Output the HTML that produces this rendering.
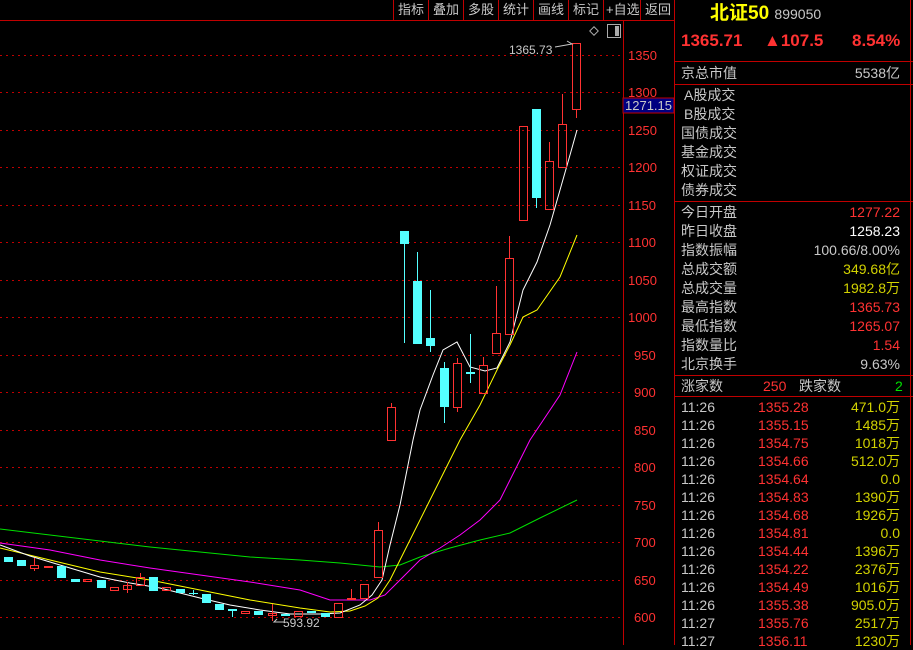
<!DOCTYPE html>
<html><head><meta charset="utf-8"><style>
body{margin:0;width:913px;height:645px;background:#000;overflow:hidden;font-family:"Liberation Sans","Noto Sans CJK SC",sans-serif;position:relative}
.tb{position:absolute;top:0;height:20px;font-size:13px;color:#c8c8c8;line-height:20px;border-left:1px solid #c00000;padding:0 4px}
.p{position:absolute;font-size:14px;line-height:19px;color:#c8c8c8;white-space:nowrap}
.r{color:#ff3232}.y{color:#d2d200}.w{color:#fff}.g{color:#00e000}
.hl{position:absolute;left:675px;width:238px;height:1px;background:#c00000}
</style></head><body>
<svg width="913" height="645" style="position:absolute;left:0;top:0" xmlns="http://www.w3.org/2000/svg">
<g stroke="#c00000" stroke-width="1">
<line x1="0" y1="20.5" x2="675" y2="20.5"/>
<line x1="623.5" y1="20" x2="623.5" y2="645"/>
<line x1="674.5" y1="0" x2="674.5" y2="645"/>
<line x1="910.5" y1="0" x2="910.5" y2="645"/>
</g>
<g stroke="#c00000" stroke-dasharray="2,4">
<line x1="0" y1="55.5" x2="620" y2="55.5"/><line x1="0" y1="92.5" x2="620" y2="92.5"/><line x1="0" y1="130.5" x2="620" y2="130.5"/><line x1="0" y1="167.5" x2="620" y2="167.5"/><line x1="0" y1="205.5" x2="620" y2="205.5"/><line x1="0" y1="242.5" x2="620" y2="242.5"/><line x1="0" y1="280.5" x2="620" y2="280.5"/><line x1="0" y1="317.5" x2="620" y2="317.5"/><line x1="0" y1="355.5" x2="620" y2="355.5"/><line x1="0" y1="392.5" x2="620" y2="392.5"/><line x1="0" y1="430.5" x2="620" y2="430.5"/><line x1="0" y1="467.5" x2="620" y2="467.5"/><line x1="0" y1="505.5" x2="620" y2="505.5"/><line x1="0" y1="542.5" x2="620" y2="542.5"/><line x1="0" y1="580.5" x2="620" y2="580.5"/><line x1="0" y1="617.5" x2="620" y2="617.5"/>
</g>
<g fill="#ff3232" font-size="13" font-family="Liberation Sans">
<text x="628" y="60">1350</text><text x="628" y="97">1300</text><text x="628" y="135">1250</text><text x="628" y="172">1200</text><text x="628" y="210">1150</text><text x="628" y="247">1100</text><text x="628" y="285">1050</text><text x="628" y="322">1000</text><text x="634" y="360">950</text><text x="634" y="397">900</text><text x="634" y="435">850</text><text x="634" y="472">800</text><text x="634" y="510">750</text><text x="634" y="547">700</text><text x="634" y="585">650</text><text x="634" y="622">600</text>
</g>
<rect x="623" y="98" width="51" height="15" fill="#000080" stroke="#c00000"/>
<text x="625" y="110" fill="#c8c8c8" font-size="13" font-family="Liberation Sans">1271.15</text>
<g fill="none" stroke-width="1">
<polyline stroke="#00e000" points="0,529 50,535 100,541 150,547 200,552 250,557 300,560 340,563 380,567 400,565 420,557 450,548 480,540 510,533 540,518 577,500"/>
<polyline stroke="#ff00ff" points="0,543 50,550 100,560 150,568 200,575 250,582 300,590 330,600 370,600 385,595 400,580 420,560 440,548 460,535 480,520 500,500 530,440 560,395 577,352"/>
<polyline stroke="#ffff00" points="0,548 50,560 100,572 150,580 200,590 250,600 300,608 330,612 350,611 365,606 378,598 390,580 400,560 430,500 460,440 480,405 497,370 510,345 523,317 537,310 560,277 577,235"/>
<polyline stroke="#ffffff" points="0,545 30,556 60,565 100,577 130,583 160,588 200,598 230,605 260,610 290,614 320,614 340,613 360,605 372,595 382,580 390,545 400,505 413,440 420,410 433,375 443,350 457,342 470,367 485,371 497,368 510,342 523,290 537,262 550,225 560,190 570,155 577,130"/>
</g>
<g fill="#54ffff">
<rect x="4" y="557" width="9" height="5"/><rect x="17" y="560" width="9" height="6"/><rect x="57" y="566" width="9" height="12"/><rect x="71" y="579" width="9" height="3"/><rect x="97" y="580" width="9" height="8"/><rect x="149" y="577" width="9" height="14"/><rect x="176" y="589" width="9" height="4"/><rect x="189" y="593" width="9" height="1"/><rect x="202" y="594" width="9" height="9"/><rect x="215" y="604" width="9" height="6"/><rect x="228" y="609" width="9" height="2"/><rect x="254" y="611" width="9" height="4"/><rect x="281" y="614" width="9" height="2"/><rect x="307" y="611" width="9" height="2"/><rect x="321" y="613" width="9" height="4"/>
<rect x="400" y="231" width="9" height="13"/><rect x="413" y="281" width="9" height="63"/><rect x="426" y="338" width="9" height="8"/><rect x="440" y="368" width="9" height="39"/><rect x="466" y="372" width="9" height="2"/><rect x="532" y="109" width="9" height="89"/>
</g>
<g stroke="#54ffff">
<line x1="193.5" y1="590" x2="193.5" y2="595"/><line x1="232.5" y1="609" x2="232.5" y2="617"/><line x1="404.5" y1="244" x2="404.5" y2="343"/><line x1="417.5" y1="252" x2="417.5" y2="281"/><line x1="430.5" y1="290" x2="430.5" y2="352"/><line x1="444.5" y1="362" x2="444.5" y2="423"/><line x1="470.5" y1="334" x2="470.5" y2="383"/><line x1="536.5" y1="198" x2="536.5" y2="208"/>
</g>
<g stroke="#ff3232" fill="none">
<rect x="30.5" y="565.5" width="8" height="3"/><line x1="34.5" y1="558" x2="34.5" y2="565"/><line x1="34.5" y1="569" x2="34.5" y2="571"/>
<rect x="44.5" y="566.5" width="8" height="1"/>
<rect x="83.5" y="579.5" width="8" height="2"/>
<rect x="110.5" y="587.5" width="8" height="3"/>
<rect x="123.5" y="585.5" width="8" height="4"/><line x1="127.5" y1="582" x2="127.5" y2="593"/>
<rect x="136.5" y="577.5" width="8" height="8"/><line x1="140.5" y1="573" x2="140.5" y2="577"/>
<rect x="162.5" y="587.5" width="8" height="3"/>
<rect x="241.5" y="611.5" width="8" height="2"/>
<rect x="268.5" y="613.5" width="8" height="2"/><line x1="272.5" y1="604" x2="272.5" y2="621"/>
<rect x="294.5" y="611.5" width="8" height="5"/>
<rect x="334.5" y="603.5" width="8" height="14"/>
<rect x="347.5" y="598.5" width="8" height="1"/><line x1="351.5" y1="589" x2="351.5" y2="598"/>
<rect x="360.5" y="584.5" width="8" height="14"/>
<rect x="374.5" y="530.5" width="8" height="47"/><line x1="378.5" y1="522" x2="378.5" y2="530"/>
<rect x="387.5" y="407.5" width="8" height="33"/><line x1="391.5" y1="403" x2="391.5" y2="407"/>
<rect x="453.5" y="363.5" width="8" height="44"/><line x1="457.5" y1="358" x2="457.5" y2="363"/><line x1="457.5" y1="408" x2="457.5" y2="412"/>
<rect x="479.5" y="365.5" width="8" height="28"/><line x1="483.5" y1="357" x2="483.5" y2="365"/>
<rect x="492.5" y="333.5" width="8" height="20"/><line x1="496.5" y1="286" x2="496.5" y2="333"/>
<rect x="505.5" y="258.5" width="8" height="76"/><line x1="509.5" y1="236" x2="509.5" y2="258"/>
<rect x="519.5" y="126.5" width="8" height="94"/>
<rect x="545.5" y="161.5" width="8" height="48"/><line x1="549.5" y1="142" x2="549.5" y2="161"/>
<rect x="558.5" y="124.5" width="8" height="43"/><line x1="562.5" y1="94" x2="562.5" y2="124"/>
<rect x="572.5" y="43.5" width="8" height="66"/><line x1="576.5" y1="110" x2="576.5" y2="118"/>
</g>
<text x="509" y="54" fill="#c8c8c8" font-size="12" font-family="Liberation Sans">1365.73</text>
<polyline points="555,47 572,44 567,41" fill="none" stroke="#c8c8c8"/>
<text x="283" y="627" fill="#c8c8c8" font-size="12" font-family="Liberation Sans">593.92</text>
<polyline points="284,622 274,622 277,619" fill="none" stroke="#c8c8c8"/>
<rect x="591" y="28" width="6" height="6" transform="rotate(45 594 31)" fill="none" stroke="#aaa"/>
<rect x="607.5" y="24.5" width="13" height="13" fill="none" stroke="#aaa"/><rect x="615" y="26" width="4" height="10" fill="#aaa"/>
</svg>
<div class="tb" style="left:393px">指标</div><div class="tb" style="left:428px">叠加</div><div class="tb" style="left:463px">多股</div><div class="tb" style="left:498px">统计</div><div class="tb" style="left:533px">画线</div><div class="tb" style="left:568px">标记</div><div class="tb" style="left:603px;padding:0 2px">+自选</div><div class="tb" style="left:640px">返回</div>
<div class="p" style="left:710px;top:2px;font-size:19px;line-height:24px;color:#ffff00;font-weight:bold">北证50 <span style="font-size:14px;color:#c8c8c8;font-weight:normal">899050</span></div>
<div class="p r" style="left:681px;top:30px;font-size:17px;line-height:22px;font-weight:bold">1365.71</div>
<div class="p r" style="left:764px;top:30px;font-size:17px;line-height:22px;font-weight:bold">▲107.5</div>
<div class="p r" style="left:852px;top:30px;font-size:17px;line-height:22px;font-weight:bold">8.54%</div>
<div class="hl" style="top:61px"></div>
<div class="p" style="left:681px;top:64px">京总市值</div><div class="p" style="right:13px;top:64px">5538亿</div>
<div class="hl" style="top:84px"></div>
<div class="p" style="left:684px;top:86px;line-height:19px">A股成交<br>B股成交</div>
<div class="p" style="left:681px;top:124px;line-height:19px">国债成交<br>基金成交<br>权证成交<br>债券成交</div>
<div class="hl" style="top:201px"></div>
<div class="p" style="left:681px;top:203px;line-height:19px">今日开盘<br>昨日收盘<br>指数振幅<br>总成交额<br>总成交量<br>最高指数<br>最低指数<br>指数量比<br>北京换手</div>
<div class="p" style="right:13px;top:203px;line-height:19px;text-align:right"><span class="r">1277.22</span><br><span class="w">1258.23</span><br>100.66/8.00%<br><span class="y">349.68亿</span><br><span class="y">1982.8万</span><br><span class="r">1365.73</span><br><span class="r">1265.07</span><br><span class="r">1.54</span><br>9.63%</div>
<div class="hl" style="top:375px"></div>
<div class="p" style="left:681px;top:377px">涨家数</div><div class="p r" style="left:763px;top:377px">250</div><div class="p" style="left:799px;top:377px">跌家数</div><div class="p g" style="left:895px;top:377px">2</div>
<div class="hl" style="top:396px"></div>
<div class="p" style="left:681px;top:398px;line-height:18px">11:26<br>11:26<br>11:26<br>11:26<br>11:26<br>11:26<br>11:26<br>11:26<br>11:26<br>11:26<br>11:26<br>11:26<br>11:27<br>11:27</div>
<div class="p r" style="left:758px;top:398px;line-height:18px">1355.28<br>1355.15<br>1354.75<br>1354.66<br>1354.64<br>1354.83<br>1354.68<br>1354.81<br>1354.44<br>1354.22<br>1354.49<br>1355.38<br>1355.76<br>1356.11</div>
<div class="p y" style="right:13px;top:398px;line-height:18px;text-align:right">471.0万<br>1485万<br>1018万<br>512.0万<br>0.0<br>1390万<br>1926万<br>0.0<br>1396万<br>2376万<br>1016万<br>905.0万<br>2517万<br>1230万</div>
</body></html>
